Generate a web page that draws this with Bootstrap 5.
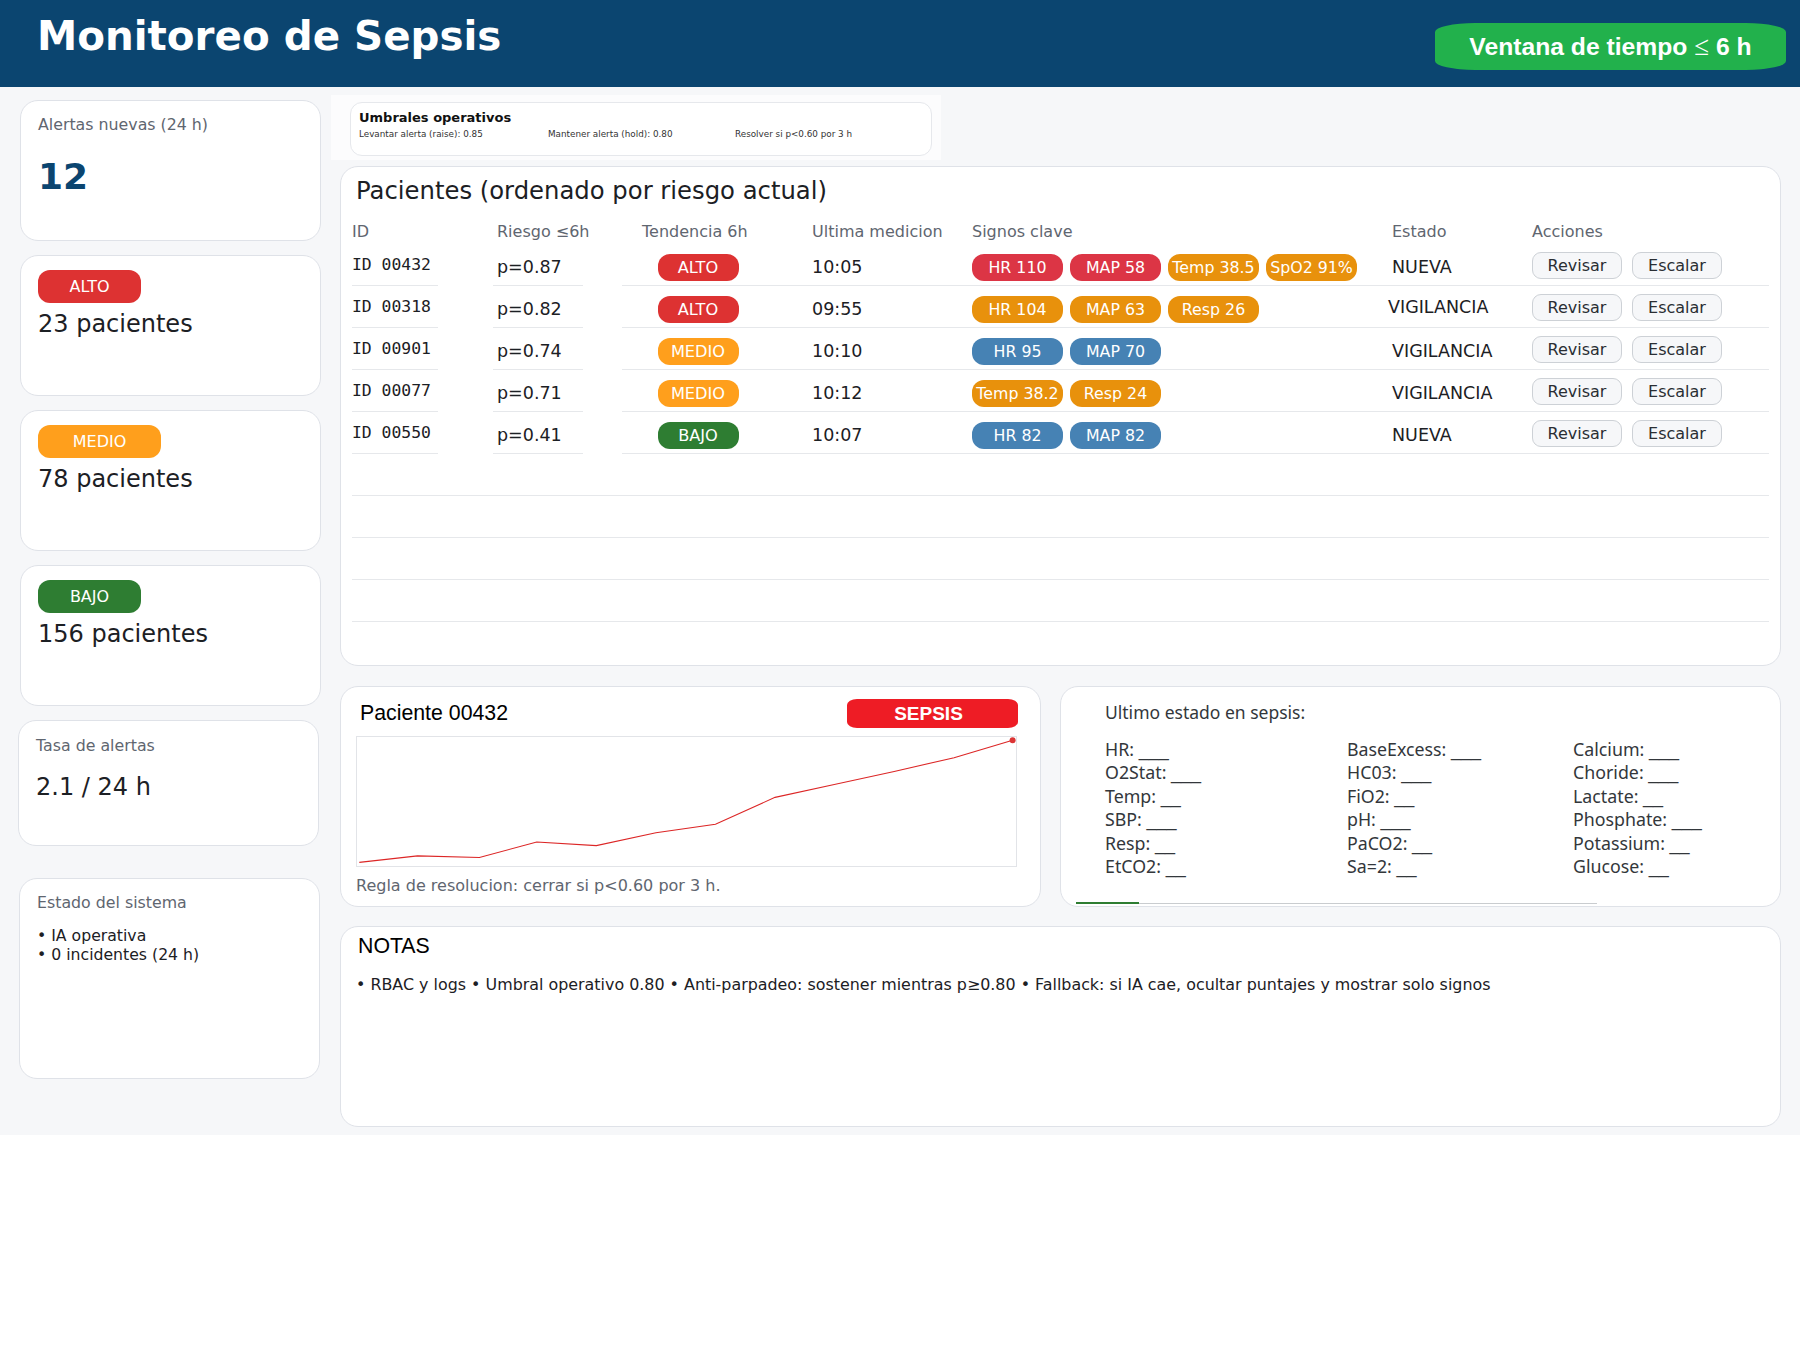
<!DOCTYPE html>
<html lang="es">
<head>
<meta charset="utf-8">
<title>Monitoreo de Sepsis</title>
<link href="https://cdn.jsdelivr.net/npm/bootstrap@5.3.0/dist/css/bootstrap.min.css" rel="stylesheet">
<style>
body{background:#fff;font-family:"DejaVu Sans",sans-serif;color:#1c2024;font-size:16px}
.topbar{height:87px;background:#0b4570;padding:0 14px 0 37px}
.app-title{font-size:40.4px;font-weight:700;color:#fff;line-height:48px;margin:12px 0 0}
.window-pill{width:351px;height:47px;margin-top:23px;background:#22b14c;border-radius:40px/9px;color:#fff;font:700 24.7px/46px "Liberation Sans",sans-serif;text-align:center;white-space:nowrap}
.thin-sign{font-family:"Liberation Serif",serif;font-weight:400;font-size:27px}
.page-bg{background:#f6f7f9;height:1048px}
.side{width:331px;flex:none;padding:13px 0 0 20px}
.main-col{flex:1;min-width:0;padding:8px 19px 0 9px}
.panel{background:#fff;border:1px solid #dfe2e8;border-radius:18px}
.side .panel{width:301px}
.kpi{height:141px;padding:13px 17px;margin-bottom:14px}
.kpi-alert{padding-top:12px}
.kpi-risk{padding-top:14px}
.kpi-rate{height:126px;margin:4px 0 32px -2px;padding:13px 17px}
.kpi-sys{height:201px;margin-left:-1px;padding:12px 17px}
.muted-label{color:#5f6670;line-height:24px;font-size:15.8px}
.big-num{font-size:36px;font-weight:700;color:#0b4570;line-height:44px;margin-top:18px}
.big-txt{font-size:24px;line-height:30px}
.rate-val{margin-top:14px}
.risk-pill{display:block;height:33px;border-radius:12px;color:#fff;line-height:34px;text-align:center;margin-bottom:6px}
.w-a{width:103px}.w-m{width:123px}
.c-alto{background:#dd3232}.c-medio{background:#ff9f1c}.c-bajo{background:#2e7d32}
.sys-lines{line-height:18.5px;margin-top:12px;font-size:15.7px}
.thr-wrap{width:610px;height:65px;margin-left:-9px;background:#fcfcfd;padding:7px 0 0 19px}
.thr-card{width:582px;height:54px;border-radius:12px;padding:7px 8px;border-color:#e6e8ec}
.thr-title{font-size:13px;font-weight:700;line-height:16px;color:#111}
.thr-row{font-size:8.8px;line-height:11px;color:#333;margin-top:3px}
.thr-row span:nth-child(1){width:189px}
.thr-row span:nth-child(2){width:187px}
.pat-card{height:500px;margin-top:6px;padding:9px 11px 0 11px}
.pat-title{font-size:24.3px;line-height:29px;margin:0 0 13px 4px;font-weight:400}
.tb-row{display:flex;height:42px}
.tb-head{height:26px;color:#5f6670;line-height:27px;white-space:nowrap}
.c-id{width:86px;flex:none;margin-right:55px}
.c-risk{width:90px;flex:none;margin-right:39px;padding-left:4px}
.c-rest{flex:1;display:flex;min-width:0}
.tb-line .c-id,.tb-line .c-risk,.tb-line .c-rest{border-bottom:1px solid #e6e8eb;padding-top:10px}
.tb-blank{border-bottom:1px solid #e6e8eb}
.c-trend{width:190px;flex:none;padding-left:36px}
.tb-head .c-trend{padding-left:20px}
.c-time{width:160px;flex:none}
.c-sign{width:420px;flex:none;gap:7px}
.c-state{width:140px;flex:none}
.val{font-size:17.5px;line-height:26px}
.mono{font-family:"DejaVu Sans Mono",monospace;font-size:16.4px;line-height:22px}
.t-pill{display:block;width:81px;height:27px;border-radius:12px;color:#fff;text-align:center;line-height:28px;font-size:16.2px;padding-right:1px}
.s-pill{display:block;width:91px;height:27px;border-radius:12px;color:#fff;text-align:center;line-height:28px;font-size:15.8px;white-space:nowrap;overflow:hidden}
.c-red{background:#dc3545}.c-amb{background:#e8910c}.c-blu{background:#4682b4}
.shift{margin-left:-4px;margin-top:-2px}
.act-btn{width:90px;height:27px;padding:0;margin:-2px 10px 0 0;font-size:16px;line-height:23px;background:#f6f7f9;border:1px solid #cdd1d6;border-radius:9px;color:#2a2e33}
.bottom-row{margin-top:20px;gap:19px}
.chart-card{width:701px;height:221px;padding:12px 15px 0;flex:none}
.lib-title{font-family:"Liberation Sans",sans-serif;font-size:21.3px;line-height:28px;color:#000}
.chart-name{padding-left:4px}
.sepsis-tag{width:171px;height:29px;background:#ee1c25;border-radius:10px/6px;color:#fff;font:700 19px/30px "Liberation Sans",sans-serif;text-align:center;margin-right:7px;padding-right:8px}
.chart-box{display:block;width:661px;height:131px;border:1px solid #e2e4e8;margin-top:8px;overflow:visible}
.caption{color:#5f6670;line-height:24px;margin-top:7px}
.last-card{flex:1;min-width:0;height:221px;padding:12px 0 0 44px;font-family:"Noto Sans",sans-serif;color:#33373b;font-size:17.8px;position:relative}
.last-title{line-height:26px;margin-bottom:13px;font-size:17.5px}
.lab-col{line-height:23.4px;white-space:nowrap}
.lab-a{width:242px}.lab-b{width:226px}
.blk{font-family:"Liberation Sans",sans-serif;font-size:18px;line-height:0}
.bar-track{position:absolute;left:15px;bottom:2px;width:521px;height:1px;background:#c9cccf}
.bar-fill{position:absolute;left:0;bottom:0;width:63px;height:2px;background:#2e7d32}
.notes-card{height:201px;margin-top:19px;padding:5px 15px}
.notes-title{padding-left:2px}
.notes-txt{line-height:24px;margin-top:13px;font-size:15.9px}
</style>
</head>
<body>
<header class="topbar d-flex justify-content-between align-items-start">
  <h1 class="app-title">Monitoreo de Sepsis</h1>
  <div class="window-pill">Ventana de tiempo <span class="thin-sign">≤</span> 6 h</div>
</header>
<div class="page-bg d-flex">
  <aside class="side">
    <div class="panel kpi kpi-alert"><div class="muted-label">Alertas nuevas (24 h)</div><div class="big-num">12</div></div>
    <div class="panel kpi kpi-risk"><span class="risk-pill c-alto w-a">ALTO</span><div class="big-txt">23 pacientes</div></div>
    <div class="panel kpi kpi-risk"><span class="risk-pill c-medio w-m">MEDIO</span><div class="big-txt">78 pacientes</div></div>
    <div class="panel kpi kpi-risk"><span class="risk-pill c-bajo w-a">BAJO</span><div class="big-txt">156 pacientes</div></div>
    <div class="panel kpi-rate"><div class="muted-label">Tasa de alertas</div><div class="big-txt rate-val">2.1 / 24 h</div></div>
    <div class="panel kpi-sys"><div class="muted-label">Estado del sistema</div><div class="sys-lines">• IA operativa<br>• 0 incidentes (24 h)</div></div>
  </aside>
  <main class="main-col">
    <div class="thr-wrap">
      <div class="panel thr-card">
        <div class="thr-title">Umbrales operativos</div>
        <div class="thr-row d-flex"><span>Levantar alerta (raise): 0.85</span><span>Mantener alerta (hold): 0.80</span><span>Resolver si p&lt;0.60 por 3 h</span></div>
      </div>
    </div>
    <section class="panel pat-card">
      <h2 class="pat-title">Pacientes (ordenado por riesgo actual)</h2>
      <div class="tb-row tb-head">
        <div class="c-id">ID</div><div class="c-risk">Riesgo ≤6h</div>
        <div class="c-rest"><div class="c-trend">Tendencia 6h</div><div class="c-time">Ultima medicion</div><div class="c-sign">Signos clave</div><div class="c-state">Estado</div><div>Acciones</div></div>
      </div>
      <div class="tb-row tb-line">
        <div class="c-id mono">ID 00432</div><div class="c-risk val">p=0.87</div>
        <div class="c-rest"><div class="c-trend"><span class="t-pill c-alto">ALTO</span></div><div class="c-time val">10:05</div>
          <div class="c-sign d-flex"><span class="s-pill c-red">HR 110</span><span class="s-pill c-red">MAP 58</span><span class="s-pill c-amb">Temp 38.5</span><span class="s-pill c-amb">SpO2 91%</span></div>
          <div class="c-state val">NUEVA</div><div class="d-flex"><button class="btn act-btn">Revisar</button><button class="btn act-btn">Escalar</button></div></div>
      </div>
      <div class="tb-row tb-line">
        <div class="c-id mono">ID 00318</div><div class="c-risk val">p=0.82</div>
        <div class="c-rest"><div class="c-trend"><span class="t-pill c-alto">ALTO</span></div><div class="c-time val">09:55</div>
          <div class="c-sign d-flex"><span class="s-pill c-amb">HR 104</span><span class="s-pill c-amb">MAP 63</span><span class="s-pill c-amb">Resp 26</span></div>
          <div class="c-state val"><div class="shift">VIGILANCIA</div></div><div class="d-flex"><button class="btn act-btn">Revisar</button><button class="btn act-btn">Escalar</button></div></div>
      </div>
      <div class="tb-row tb-line">
        <div class="c-id mono">ID 00901</div><div class="c-risk val">p=0.74</div>
        <div class="c-rest"><div class="c-trend"><span class="t-pill c-medio">MEDIO</span></div><div class="c-time val">10:10</div>
          <div class="c-sign d-flex"><span class="s-pill c-blu">HR 95</span><span class="s-pill c-blu">MAP 70</span></div>
          <div class="c-state val">VIGILANCIA</div><div class="d-flex"><button class="btn act-btn">Revisar</button><button class="btn act-btn">Escalar</button></div></div>
      </div>
      <div class="tb-row tb-line">
        <div class="c-id mono">ID 00077</div><div class="c-risk val">p=0.71</div>
        <div class="c-rest"><div class="c-trend"><span class="t-pill c-medio">MEDIO</span></div><div class="c-time val">10:12</div>
          <div class="c-sign d-flex"><span class="s-pill c-amb">Temp 38.2</span><span class="s-pill c-amb">Resp 24</span></div>
          <div class="c-state val">VIGILANCIA</div><div class="d-flex"><button class="btn act-btn">Revisar</button><button class="btn act-btn">Escalar</button></div></div>
      </div>
      <div class="tb-row tb-line">
        <div class="c-id mono">ID 00550</div><div class="c-risk val">p=0.41</div>
        <div class="c-rest"><div class="c-trend"><span class="t-pill c-bajo">BAJO</span></div><div class="c-time val">10:07</div>
          <div class="c-sign d-flex"><span class="s-pill c-blu">HR 82</span><span class="s-pill c-blu">MAP 82</span></div>
          <div class="c-state val">NUEVA</div><div class="d-flex"><button class="btn act-btn">Revisar</button><button class="btn act-btn">Escalar</button></div></div>
      </div>
      <div class="tb-row tb-blank"></div><div class="tb-row tb-blank"></div><div class="tb-row tb-blank"></div><div class="tb-row tb-blank"></div>
    </section>
    <div class="d-flex bottom-row">
      <section class="panel chart-card">
        <div class="d-flex justify-content-between"><div class="lib-title chart-name">Paciente 00432</div><div class="sepsis-tag">SEPSIS</div></div>
        <svg class="chart-box" viewBox="0 0 660 131" preserveAspectRatio="none" aria-label="Riesgo del paciente 00432">
          <polyline fill="none" stroke="#dc2626" stroke-width="1.1" points="2.3,127.3 60.6,120.7 122.6,122.3 180,106.7 239.7,110.3 299.4,97.3 359,88.7 418.7,61.3 478,48.3 538,35 598,21 656.6,3.3"/>
          <circle cx="656.6" cy="3.3" r="3" fill="#dc3535"/>
        </svg>
        <div class="caption">Regla de resolucion: cerrar si p&lt;0.60 por 3 h.</div>
      </section>
      <section class="panel last-card">
        <div class="last-title">Ultimo estado en sepsis:</div>
        <div class="d-flex">
          <div class="lab-col lab-a">HR: <span class="blk">___</span><br>O2Stat: <span class="blk">___</span><br>Temp: <span class="blk">__</span><br>SBP: <span class="blk">___</span><br>Resp: <span class="blk">__</span><br>EtCO2: <span class="blk">__</span></div>
          <div class="lab-col lab-b">BaseExcess: <span class="blk">___</span><br>HC03: <span class="blk">___</span><br>FiO2: <span class="blk">__</span><br>pH: <span class="blk">___</span><br>PaCO2: <span class="blk">__</span><br>Sa=2: <span class="blk">__</span></div>
          <div class="lab-col">Calcium: <span class="blk">___</span><br>Choride: <span class="blk">___</span><br>Lactate: <span class="blk">__</span><br>Phosphate: <span class="blk">___</span><br>Potassium: <span class="blk">__</span><br>Glucose: <span class="blk">__</span></div>
        </div>
        <div class="bar-track"><div class="bar-fill"></div></div>
      </section>
    </div>
    <section class="panel notes-card">
      <div class="lib-title notes-title">NOTAS</div>
      <div class="notes-txt">• RBAC y logs • Umbral operativo 0.80 • Anti-parpadeo: sostener mientras p≥0.80 • Fallback: si IA cae, ocultar puntajes y mostrar solo signos</div>
    </section>
  </main>
</div>
</body>
</html>
